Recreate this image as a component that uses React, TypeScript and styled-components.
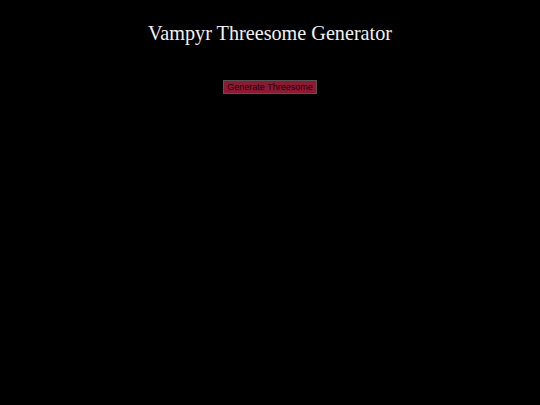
import React from 'react';
import styled, { createGlobalStyle } from 'styled-components';

const GlobalStyle = createGlobalStyle`
  html, body {
    margin: 0;
    padding: 0;
    background: #000;
  }
  body {
    font-family: "Liberation Serif", "Times New Roman", serif;
  }
`;

const Page = styled.div`
  min-height: 405px;
  background: #000;
  display: flex;
  flex-direction: column;
  align-items: center;
`;

const Title = styled.h1`
  margin: 21px 0 0;
  font-size: 20.2px;
  font-weight: normal;
  line-height: 24px;
  color: #f2f2f2;
`;

const GenerateButton = styled.button`
  margin-top: 35px;
  height: 14px;
  padding: 0 3px;
  font-family: "Liberation Sans", Arial, sans-serif;
  font-size: 9px;
  line-height: 12px;
  color: #1a0206;
  background: #8c1a32;
  border: 1px solid #555;
  cursor: pointer;
`;

function App() {
  return (
    <>
      <GlobalStyle />
      <Page>
        <Title>Vampyr Threesome Generator</Title>
        <GenerateButton>Generate Threesome</GenerateButton>
      </Page>
    </>
  );
}

export default App;
